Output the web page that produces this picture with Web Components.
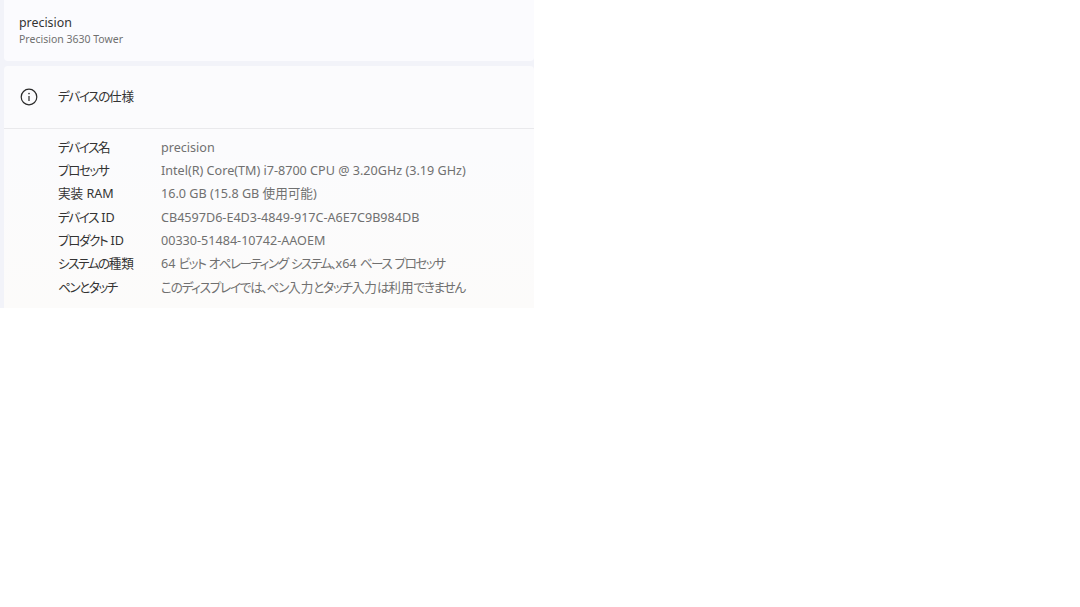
<!DOCTYPE html>
<html lang="ja"><head><meta charset="utf-8">
<style>html,body{margin:0;background:#fff}</style></head>
<body>
<settings-pane>
  <device-card name="precision" model="Precision 3630 Tower"></device-card>
  <spec-card title-text="デバイスの仕様">
    <spec-row label="デバイス名" value="precision"></spec-row>
    <spec-row label="プロセッサ" value="Intel(R) Core(TM) i7-8700 CPU @ 3.20GHz (3.19 GHz)"></spec-row>
    <spec-row label="実装 RAM" value="16.0 GB (15.8 GB 使用可能)"></spec-row>
    <spec-row label="デバイス ID" value="CB4597D6-E4D3-4849-917C-A6E7C9B984DB"></spec-row>
    <spec-row label="プロダクト ID" value="00330-51484-10742-AAOEM"></spec-row>
    <spec-row style="--vk:-1.5px" label="システムの種類" value="64 ビット オペレーティング システム、x64 ベース プロセッサ"></spec-row>
    <spec-row label="ペンとタッチ" value="このディスプレイでは、ペン入力とタッチ入力は利用できません"></spec-row>
  </spec-card>
</settings-pane>
<script>
const FONT='"Noto Sans","Noto Sans CJK JP",sans-serif';
const kana=s=>s.replace(/[\u3000-\u30ff]+/g,m=>`<span class="k">${m}</span>`);
class SettingsPane extends HTMLElement{constructor(){super();this.attachShadow({mode:'open'}).innerHTML=`<style>
:host{display:flex;flex-direction:column;gap:5px;width:530px;height:308px;padding-left:4px;overflow:hidden;background:#f2f3f9;font-family:${FONT};font-feature-settings:"palt" 1}
</style><slot></slot>`}}
class DeviceCard extends HTMLElement{constructor(){super();this.attachShadow({mode:'open'}).innerHTML=`<style>
:host{display:flex;flex-direction:column;box-sizing:border-box;height:61px;flex:none;padding:15px 0 0 15px;background:#fbfbfe;border-radius:0 0 4px 4px}
.n{font-size:12.4px;line-height:16px;color:#333}
.m{font-size:10.5px;line-height:16px;color:#707070}
</style><div class="n">${this.getAttribute('name')}</div><div class="m">${this.getAttribute('model')}</div>`}}
class SpecCard extends HTMLElement{constructor(){super();this.attachShadow({mode:'open'}).innerHTML=`<style>
:host{display:flex;flex-direction:column;flex:1;min-height:0;background:linear-gradient(#fbfbfd 0,#fbfbfd 35%,#fcfbfa 100%);border-radius:4px 4px 0 0}
header{display:flex;align-items:center;gap:20px;height:63px;box-sizing:border-box;padding-left:16px;border-bottom:1px solid #e9e9ec;flex:none}
svg{width:18px;height:18px;flex:none}
h2{margin:0;font-weight:400;font-size:12.6px;line-height:16px;color:#333}
.k{letter-spacing:-1.4px}
.rows{display:flex;flex-direction:column;padding-top:7px}
</style><header><svg viewBox="0 0 18 18" fill="none" stroke="#2a2a2a" stroke-width="1.2"><circle cx="9" cy="9" r="7.8"/><path d="M9 8v5"/><circle cx="9" cy="5.6" r=".8" fill="#2a2a2a" stroke="none"/></svg><h2>${kana(this.getAttribute('title-text'))}</h2></header><div class="rows"><slot></slot></div>`}}
class SpecRow extends HTMLElement{constructor(){super();this.attachShadow({mode:'open'}).innerHTML=`<style>
:host{display:grid;grid-template-columns:103px 1fr;height:23.35px;align-items:center;padding-left:54px;font-size:12.6px;line-height:16px;white-space:nowrap}
.l{color:#333}.v{color:#707070}
.l .k{letter-spacing:-1.45px}.v .k{letter-spacing:var(--vk,-1.25px)}
</style><span class="l">${kana(this.getAttribute('label'))}</span><span class="v">${kana(this.getAttribute('value'))}</span>`}}
customElements.define('settings-pane',SettingsPane);
customElements.define('device-card',DeviceCard);
customElements.define('spec-card',SpecCard);
customElements.define('spec-row',SpecRow);
</script>
</body></html>
